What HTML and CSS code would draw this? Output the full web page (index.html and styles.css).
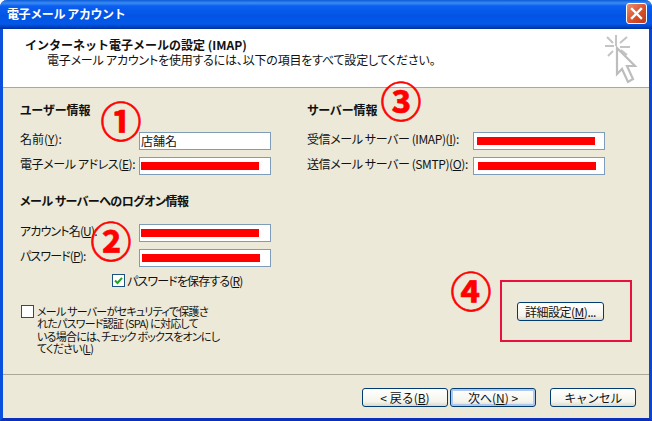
FILE: index.html
```html
<!DOCTYPE html>
<html lang="ja">
<head>
  <meta charset="UTF-8" />
  <title>電子メール アカウント</title>
  <link rel="stylesheet" href="styles.css">
</head>
<body>
  <div class="window">
    <div class="titlebar">
      <span class="title">電子メール アカウント</span>
      <div class="close">
        <svg width="13" height="13" viewBox="0 0 13 13"><path d="M2 2 L11 11 M11 2 L2 11" stroke="#fff" stroke-width="2.4" stroke-linecap="square"/></svg>
      </div>
    </div>

    <div class="header">
      <div class="header-text">
        <div class="header-title">インターネット電子メールの設定 (IMAP)</div>
        <div class="header-sub">電子メール アカウントを使用するには、以下の項目をすべて設定してください。</div>
      </div>
      <svg class="wizard-icon" width="36" height="52" viewBox="0 0 36 52">
        <path d="M13 2 V13 M2 13 H11 M24 4 L17 10 M4 4 L10 10 M27 14 H17 M5 23 L10 18 M24 22 L18 17" stroke="#c4c4c4" stroke-width="2" fill="none"/>
        <path d="M14 15 L32 33 L24 33 L30 46 L25 49 L19 36 L14 41 Z" fill="#fff" stroke="#bdbdbd" stroke-width="2.2" stroke-linejoin="miter"/>
      </svg>
    </div>

    <div class="main">
      <div class="col-left">
        <h3>ユーザー情報</h3>
        <div class="row">
          <label>名前(<u>Y</u>):</label>
          <div class="field">店舗名</div>
        </div>
        <div class="row">
          <label class="tight-s">電子メール アドレス(<u>E</u>):</label>
          <div class="field"><span class="bar"></span></div>
        </div>

        <h3 class="section-next">メール サーバーへのログオン情報</h3>
        <div class="row">
          <label class="tight-l">アカウント名(<u>U</u>):</label>
          <div class="field"><span class="bar"></span></div>
        </div>
        <div class="row">
          <label class="tight-l">パスワード(<u>P</u>):</label>
          <div class="field"><span class="bar bar-shift"></span></div>
        </div>

        <div class="check-save">
          <span class="checkbox">
            <svg width="11" height="11" viewBox="0 0 11 11"><path d="M2 5.5 L4.5 8 L9 2.8" stroke="#21a121" stroke-width="2" fill="none"/></svg>
          </span>
          <span class="tight-l">パスワードを保存する(<u>R</u>)</span>
        </div>

        <div class="check-spa">
          <span class="checkbox"></span>
          <span class="spa-text">メール サーバーがセキュリティで保護さ<br>れたパスワード認証 (SPA) に対応して<br>いる場合には、チェック ボックスをオンにし<br>てください(<u>L</u>)</span>
        </div>
      </div>

      <div class="col-right">
        <h3>サーバー情報</h3>
        <div class="row">
          <label class="tight-s">受信メール サーバー (IMAP)(<u>I</u>):</label>
          <div class="field"><span class="bar"></span></div>
        </div>
        <div class="row">
          <label class="tight-s">送信メール サーバー (SMTP)(<u>O</u>):</label>
          <div class="field"><span class="bar bar-shift"></span></div>
        </div>
        <button class="btn btn-advanced">詳細設定(<u>M</u>)...</button>
      </div>
    </div>

    <div class="footer">
      <button class="btn btn-nav">&lt; 戻る(<u>B</u>)</button>
      <button class="btn btn-nav btn-default">次へ(<u>N</u>) &gt;</button>
      <button class="btn btn-nav btn-cancel">キャンセル</button>
    </div>

    <!-- annotations drawn over the screenshot -->
    <span class="mark mark-1">①</span>
    <span class="mark mark-2">②</span>
    <span class="mark mark-3">③</span>
    <span class="mark mark-4">④</span>
    <div class="red-box"></div>
  </div>
</body>
</html>
```

FILE: styles.css
```css
* {
  box-sizing: border-box;
}

html, body {
  margin: 0;
  width: 652px;
  height: 421px;
  overflow: hidden;
  background: #fff;
}

body {
  font-family: "Noto Sans CJK JP", "Liberation Sans", sans-serif;
  font-size: 12px;
  color: #111;
  font-feature-settings: "palt";
}

.window {
  position: relative;
  width: 652px;
  height: 421px;
  display: flex;
  flex-direction: column;
  background: #ece9d8;
  border-left: 3px solid #0a50dc;
  border-right: 3px solid #0a46d0;
  border-bottom: 3px solid #0a2fb8;
  border-radius: 7px 7px 0 0;
}

.titlebar {
  height: 29px;
  margin: 0 -3px;
  padding: 0 5px 2px 7px;
  display: flex;
  align-items: center;
  justify-content: space-between;
  border-radius: 7px 7px 0 0;
  background: linear-gradient(to bottom, #0a5ad8 0, #3c8cf4 3px, #0a5ef0 6px, #0254e4 16px, #0358e8 24px, #0040c0 27px, #00309c 29px);
}

.title {
  color: #fff;
  font-weight: bold;
  font-size: 12px;
  line-height: 14px;
  font-feature-settings: normal;
  letter-spacing: -0.4px;
}

.close {
  width: 21px;
  height: 21px;
  display: flex;
  align-items: center;
  justify-content: center;
  border: 1px solid #fff;
  border-radius: 3px;
  background: linear-gradient(135deg, #e8906e, #d9502c 55%, #b93a1a);
}

.header {
  height: 59px;
  flex: none;
  display: flex;
  justify-content: space-between;
  background: #fff;
  border-bottom: 1px solid #aca899;
}

.header-text {
  padding: 8px 0 0 22px;
}

.header-title {
  font-weight: bold;
  line-height: 15px;
  font-feature-settings: normal;
}

.header-sub {
  padding-left: 22px;
  line-height: 15px;
  letter-spacing: -0.2px;
}

.wizard-icon {
  margin: 4px 10px 0 0;
}

.main {
  flex: 1;
  display: flex;
  padding: 15px 0 0 17px;
  border-bottom: 1px solid #aca899;
}

.col-left {
  width: 287px;
}

.col-right {
  flex: 1;
}

h3 {
  margin: 0 0 15px;
  font-size: 12px;
  line-height: 14px;
  font-weight: bold;
}

h3.section-next {
  margin: 19px 0 16px;
  letter-spacing: -0.5px;
}

.row {
  display: flex;
  height: 18px;
  margin-bottom: 7px;
}

.row label {
  line-height: 14px;
  white-space: nowrap;
}

.col-left .row label {
  width: 119px;
}

.col-right .row label {
  width: 166px;
}

.tight-s {
  letter-spacing: -0.4px;
}

.tight-l {
  letter-spacing: -0.85px;
}

.field {
  width: 132px;
  height: 18px;
  padding-left: 1px;
  background: #fff;
  border: 1px solid #7f9db9;
  line-height: 16px;
}

.bar {
  display: block;
  width: 118px;
  height: 8px;
  margin-top: 4px;
  background: #f00;
}

.bar-shift {
  margin-left: 1px;
}

.col-right .bar {
  margin-left: 2px;
}

.col-right .bar-shift {
  margin-left: 3px;
}

.checkbox {
  flex: none;
  width: 13px;
  height: 13px;
  display: flex;
  align-items: center;
  justify-content: center;
  background: #fff;
  border: 1px solid #1c5180;
}

.check-save {
  display: flex;
  gap: 2px;
  height: 13px;
  margin: 1px 0 0 92px;
  line-height: 13px;
  white-space: nowrap;
}

.check-spa {
  display: flex;
  gap: 3px;
  margin: 18px 0 0 1px;
}

.spa-text {
  font-size: 11px;
  letter-spacing: -0.75px;
  line-height: 12.4px;
  white-space: nowrap;
}

.btn {
  height: 19px;
  padding: 0;
  font-family: inherit;
  font-size: 12px;
  line-height: 16px;
  color: #111;
  background: linear-gradient(to bottom, #fff, #f4f3ec 75%, #dcd8c8);
  border: 1px solid #003c74;
  border-radius: 3px;
}

.btn-advanced {
  display: block;
  width: 87px;
  margin: 127px 0 0 210px;
  letter-spacing: -0.5px;
}

.footer {
  height: 43px;
  flex: none;
  display: flex;
  padding: 13px 0 0 359px;
  gap: 2px;
}

.btn-nav {
  width: 86px;
}

.btn-default {
  box-shadow: inset 0 0 0 2px #b0c8ec;
}

.btn-cancel {
  margin-left: 12px;
  letter-spacing: -0.5px;
}

/* red notes on top of the dialog */
.mark {
  position: absolute;
  width: 50px;
  height: 40px;
  font-size: 41px;
  line-height: 40px;
  text-align: center;
  font-weight: bold;
  color: #f00;
  font-feature-settings: normal;
  -webkit-text-stroke: 0.7px #f00;
}

.mark-1 { left: 93px; top: 99px; }
.mark-2 { left: 83px; top: 219px; }
.mark-3 { left: 373px; top: 79px; }
.mark-4 { left: 443px; top: 269px; }

.red-box {
  position: absolute;
  left: 497px;
  top: 280px;
  width: 132px;
  height: 62px;
  border: 2px solid #e8103c;
}
```
